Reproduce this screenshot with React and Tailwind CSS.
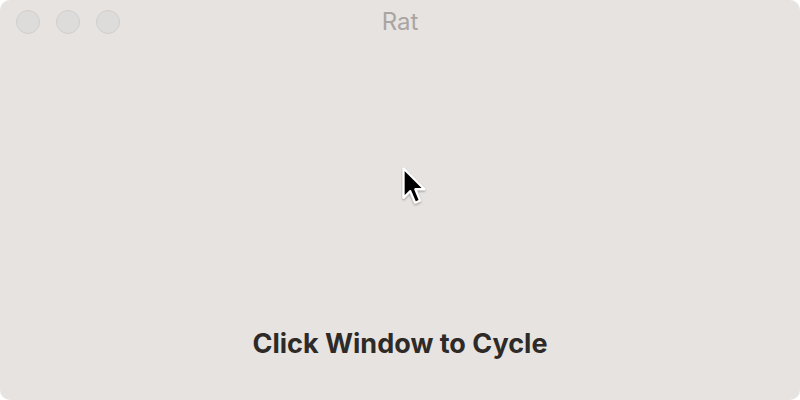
import React from 'react';

const Light = () => (
  <span className="w-[24px] h-[24px] rounded-full bg-[#dedcdb] border border-[#d0cecc]" />
);

export default function App() {
  return (
    <div className="w-[800px] h-[400px] bg-white" style={{ fontFamily: 'Inter, "Liberation Sans", sans-serif' }}>
      <div className="w-full h-full rounded-[10px] bg-[#e7e3e0] flex flex-col overflow-hidden">
        <div className="h-[44px] relative flex items-center pl-[16px] gap-[16px]">
          <Light />
          <Light />
          <Light />
          <div className="absolute inset-0 flex items-center justify-center text-[24px] text-[#a9a5a3]">Rat</div>
        </div>
        <div className="flex-1 flex items-center justify-center">
          <svg width="32" height="44" viewBox="0 0 26 36" className="ml-[33px] mt-[3px]">
            <defs>
              <filter id="sh" x="-30%" y="-30%" width="160%" height="160%">
                <feDropShadow dx="0" dy="1" stdDeviation="1" floodOpacity="0.35" />
              </filter>
            </defs>
            <path
              d="M2 2 L2 26 L7.5 20.5 L11.5 30 L15.5 28.3 L11.6 19 L19 19 Z"
              fill="#000"
              stroke="#fff"
              strokeWidth="1.8"
              strokeLinejoin="round"
              filter="url(#sh)"
            />
          </svg>
        </div>
        <div className="pb-[40px] text-center text-[27px] leading-[32px] font-bold text-[#2d2a28]">
          Click Window to Cycle
        </div>
      </div>
    </div>
  );
}
